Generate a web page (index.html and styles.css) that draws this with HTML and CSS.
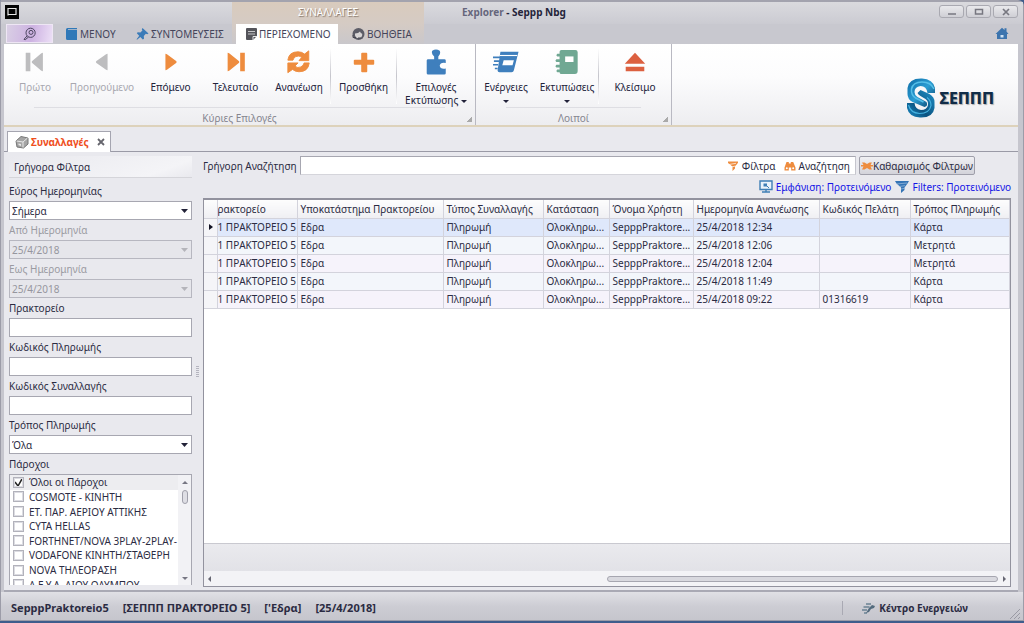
FILE: index.html
```html
<!DOCTYPE html>
<html lang="el">
<head>
<meta charset="utf-8">
<title>Explorer - Seppp Nbg</title>
<link rel="stylesheet" href="styles.css">
</head>
<body>
<div class="window">
  <header class="titlebar">
    <div class="app-icon"><svg width="14" height="14" viewBox="0 0 14 14"><rect width="14" height="14" fill="#050505"/><path d="M3 10.500V3.500h8v6H3" fill="none" stroke="#e8e8e8" stroke-width="1.200"/></svg></div>
    <div class="context-title">ΣΥΝΑΛΛΑΓΕΣ</div>
    <h1 class="caption"><span>Explorer</span> - Seppp Nbg</h1>
    <div class="window-buttons">
      <button type="button" aria-label="Minimize"><svg width="10" height="8" viewBox="0 0 10 8"><path d="M1 6h8" stroke="#777780" stroke-width="1.500"/></svg></button>
      <button type="button" aria-label="Maximize"><svg width="10" height="8" viewBox="0 0 10 8"><rect x="1.500" y="1.500" width="7" height="4.500" fill="none" stroke="#777780" stroke-width="1.500"/></svg></button>
      <button type="button" aria-label="Close"><svg width="10" height="8" viewBox="0 0 10 8"><path d="M2 1l6 6M8 1L2 7" stroke="#777780" stroke-width="1.700"/></svg></button>
    </div>
  </header>
  <nav class="tabs">
    <button type="button" class="search-button" aria-label="Explorer"><svg width="14" height="14" viewBox="0 0 14 14"><circle cx="7.600" cy="5.800" r="4.600" fill="none" stroke="#4c4660" stroke-width="1"/><circle cx="8" cy="5.400" r="2" fill="none" stroke="#4c4660" stroke-width="1"/><path d="M4 9L1 12.300l1.300.4 3.200-2.700" fill="none" stroke="#4c4660" stroke-width="1"/></svg></button>
    <a class="tab tab-menu" href="#"><svg width="13" height="14" viewBox="0 0 13 14"><path d="M2.500 1H12v1.200H3v.9h9V13H2.500A1.500 1.500 0 0 1 1 11.500v-9A1.500 1.500 0 0 1 2.500 1z" fill="#2f78b8"/></svg>ΜΕΝΟΥ</a>
    <a class="tab tab-links" href="#"><svg width="13" height="14" viewBox="0 0 13 14"><path d="M6.500 1l6 5.500-1.300.7-1.400-.4-2 2.200.2 2.700-1.200.8-2.500-2.500L1 12.700.6 12.300l2.600-3.500L.8 6.300l.9-1 2.700.1 2-2-.6-1.200z" fill="#3b7bb8"/></svg>ΣΥΝΤΟΜΕΥΣΕΙΣ</a>
    <div class="context-tabs">
      <a class="tab tab-active" href="#"><svg width="12" height="14" viewBox="0 0 12 14"><path d="M2 1h9a1 1 0 0 1 1 1v7l-4 4H2a1 1 0 0 1-1-1V2a1 1 0 0 1 1-1z" fill="#54545a"/><path d="M3 4.500h7M3 7h7" stroke="#c5c5c8"/><path d="M8 13V9.500h4" fill="none" stroke="#e8e8ea"/></svg>ΠΕΡΙΕΧΟΜΕΝΟ</a>
      <a class="tab" href="#"><svg width="13" height="14" viewBox="0 0 13 14"><circle cx="6.500" cy="7" r="6" fill="#5c5c66"/><path d="M3 6.500q3.500 0 5-2 .5 2 2.200 2.200v1.500a3.700 3.700 0 0 1-7.200 0z" fill="#d8d5d5"/><path d="M1 8v2.500h3M6 11h3" stroke="#44444e" fill="none"/></svg>ΒΟΗΘΕΙΑ</a>
    </div>
    <a class="home" href="#" aria-label="Home"><svg width="14" height="13" viewBox="0 0 14 13"><path d="M7 .8l2.500 2.100V1.300h2v3.300L13.500 7H12v5H2V7H.5z" fill="#3c74ae"/><path d="M5.500 8h3v2.500h-3z" fill="#cfe2f3"/></svg></a>
  </nav>

  <section class="ribbon">
    <div class="ribbon-group">
      <div class="ribbon-items">
        <button type="button" class="tool w62" disabled><svg viewBox="0 0 28 28"><path d="M4 4h5v20H4zM22.500 4v20q-1 0-2-.8l-9.500-8q-1.300-1.200 0-2.400l9.500-8q1-.8 2-.8z" fill="#bdbdbf"/></svg><span>Πρώτο</span></button>
        <button type="button" class="tool w72" disabled><svg viewBox="0 0 28 28"><path d="M20 5v18q-1 0-2-.8l-10-7q-1.300-1.200 0-2.400l10-7q1-.8 2-.8z" fill="#bdbdbf"/></svg><span>Προηγούμενο</span></button>
        <button type="button" class="tool w65"><svg viewBox="0 0 28 28"><path d="M8 5v18q1 0 2-.8l9.500-7q1.300-1.200 0-2.400l-9.500-7q-1-.8-2-.8z" fill="#ee8c3e"/></svg><span>Επόμενο</span></button>
        <button type="button" class="tool w65"><svg viewBox="0 0 28 28"><path d="M18.500 4h5v20h-5zM5 4v20q1 0 2-.8l10-8q1.300-1.200 0-2.400l-10-8Q6 4 5 4z" fill="#ee8c3e"/></svg><span>Τελευταίο</span></button>
        <button type="button" class="tool w62"><svg viewBox="0 0 28 28"><path d="M2 12Q3 3 13 3q4 0 7 2.500L24.500 2v10.500H14L17 9q-3-2.500-6.500-.8Q8 9.500 7.500 12zM25 15q-1 9.500-11 9.500-4 0-7-2.500L2 25.500V15h11l-3.500 3.500q3 2.500 6.500.8Q19 18 19.500 15z" fill="#ee8c3e" stroke="#ee8c3e"/></svg><span>Ανανέωση</span></button>
        <i class="divider"></i>
        <button type="button" class="tool w65"><svg viewBox="0 0 28 28"><path d="M12 4h4.500q1 0 1 1v6.500H24q1 0 1 1V16q0 1-1 1h-6.500v7q0 1-1 1H12q-1 0-1-1v-7H4q-1 0-1-1v-3.500q0-1 1-1h7V5q0-1 1-1z" fill="#ee8c3e"/></svg><span>Προσθήκη</span></button>
        <i class="divider"></i>
        <button type="button" class="tool w78"><svg viewBox="0 0 28 28"><path d="M10 2q4-3 8 0 1.500 3-1.500 6v3H23q1.500 0 1.500 1.500V15q-6-1-6.500 3 .5 4 6.500 3v5q0 1.500-1.500 1.500H5.500Q4 27.500 4 26V12.500Q4 11 5.500 11H12V8Q8.500 5 10 2z" fill="#3f7fbd"/></svg><span>Επιλογές<br>Εκτύπωσης <b class="caret"></b></span></button>
      </div>
      <div class="group-name">Κύριες Επιλογές</div>
    </div>
    <div class="ribbon-group">
      <div class="ribbon-items">
        <button type="button" class="tool w60"><svg viewBox="0 0 28 28"><path d="M8 3h19.500l-5 20q-.5 2-2.500 2H7q-2.500 0-2-2.500z" fill="#3f7fbd"/><path d="M7.500 7h18.500" stroke="#fff" stroke-width="1.200"/><path d="M11.500 12h11l-1.500 5.500H10z" fill="#fff"/><path d="M0 9h8M1 13h6M0 17h5.500M2 21h3" stroke="#3f7fbd" stroke-width="1.800"/></svg><span>Ενέργειες<br><b class="caret"></b></span></button>
        <button type="button" class="tool w62"><svg viewBox="0 0 28 28"><path d="M8 1h15q2.500 0 2.500 2.500v20q0 3.500-3 3.500H8q-2 0-2-2H3.500q-2-1.500 0-3H6v-2H2.500q-2-1.500 0-3H6v-3H2.500q-2-1.500 0-3H6V8H3.500q-2-1.500 0-3H6V3q0-2 2-2z" fill="#70a893"/><path d="M12 8h9v6h-9z" fill="#fff"/></svg><span>Εκτυπώσεις<br><b class="caret"></b></span></button>
        <i class="divider"></i>
        <button type="button" class="tool w72"><svg viewBox="0 0 28 28"><path d="M14 4l11 12H3zM4 19h20v5H4z" fill="#dc6040"/></svg><span>Κλείσιμο</span></button>
      </div>
      <div class="group-name">Λοιποί</div>
    </div>
    <div class="logo">
      <svg width="28" height="40" viewBox="0 0 28 40"><defs><linearGradient id="top" x1="0" y1="0" x2="1" y2="1"><stop offset="0" stop-color="#0d6ca6"/><stop offset=".5" stop-color="#2b9dd3"/><stop offset="1" stop-color="#0a3f66"/></linearGradient><linearGradient id="bottom" x1="1" y1="0" x2="0" y2="1"><stop offset="0" stop-color="#1f94cc"/><stop offset=".6" stop-color="#0b527f"/><stop offset="1" stop-color="#1b8cc6"/></linearGradient></defs><path d="M28 15V10Q26 1 15 .5 2 0 .5 10v6q0 5 5 8l12 5q4-1 2-5l-9-5q-3-2-3-5 0-5 6-6 6 0 7 7z" fill="url(#top)"/><path d="M0 25v5q2 9 13 9.500 13 .5 14.500-9.500v-6q0-5-5-8l-9-4-3 3q1 2 3 3l5 3q3 2 2.500 6-1 5-7 5-6-1-6.500-7z" fill="url(#bottom)"/><path d="M27 11Q24 4 15 4 6 4 4.500 11q-.5 6 4 9l8 4" fill="none" stroke="#55bfe8" stroke-width="1.500"/><path d="M1.500 27q2 8 11 8.500 10 0 11.500-8 0-5-4-8" fill="none" stroke="#45b2e0" stroke-width="1.200"/></svg>
      <span>ΣΕΠΠΠ</span>
    </div>
  </section>

  <div class="doc-tabs"><div class="doc-tab"><svg width="14" height="14" viewBox="0 0 14 14"><path d="M1 6l5-4.500L13 3v6l-4.500 4L2 12z" fill="#a5a5a5" stroke="#777"/><path d="M1.500 6L8 7l4.500-4M8 7v5.500" fill="none" stroke="#e8e8e8"/><path d="M3.500 8.500l2.500.5v2L3.500 10z" fill="#e9e9e9"/></svg><span>Συναλλαγές</span><button type="button" aria-label="Κλείσιμο καρτέλας"><svg width="8" height="8" viewBox="0 0 8 8"><path d="M1 1l6 6M7 1L1 7" stroke="#66666e" stroke-width="1.800"/></svg></button></div></div>

  <main class="page">
    <aside class="filters">
      <h2>Γρήγορα Φίλτρα</h2>
      <label for="range">Εύρος Ημερομηνίας</label>
      <select id="range"><option>Σήμερα</option></select>
      <label for="from" class="off">Από Ημερομηνία</label>
      <select id="from" disabled><option>25/4/2018</option></select>
      <label for="to" class="off">Εως Ημερομηνία</label>
      <select id="to" disabled><option>25/4/2018</option></select>
      <label for="agency">Πρακτορείο</label>
      <input id="agency" type="text">
      <label for="paycode">Κωδικός Πληρωμής</label>
      <input id="paycode" type="text">
      <label for="trcode">Κωδικός Συναλλαγής</label>
      <input id="trcode" type="text">
      <label for="method">Τρόπος Πληρωμής</label>
      <select id="method"><option>Όλα</option></select>
      <h3>Πάροχοι</h3>
      <div class="listbox">
        <div class="options">
          <label class="selected"><input type="checkbox" checked>Όλοι οι Πάροχοι</label>
          <label><input type="checkbox">COSMOTE - ΚΙΝΗΤΗ</label>
          <label><input type="checkbox">ΕΤ. ΠΑΡ. ΑΕΡΙΟΥ ΑΤΤΙΚΗΣ</label>
          <label><input type="checkbox">CYTA HELLAS</label>
          <label><input type="checkbox">FORTHNET/NOVA 3PLAY-2PLAY-</label>
          <label><input type="checkbox">VODAFONE ΚΙΝΗΤΗ/ΣΤΑΘΕΡΗ</label>
          <label><input type="checkbox">NOVA ΤΗΛΕΟΡΑΣΗ</label>
          <label><input type="checkbox">Δ.Ε.Υ.Α. ΔΙΟΥ ΟΛΥΜΠΟΥ</label>
        </div>
        <div class="vscroll"><i class="arrow up"></i><i class="thumb"></i><i class="arrow down"></i></div>
      </div>
    </aside>
    <div class="splitter"><i></i></div>
    <section class="results">
      <div class="search-row">
        <label for="quick">Γρήγορη Αναζήτηση</label>
        <div class="search-box">
          <input id="quick" type="text">
          <button type="button"><svg width="12" height="12" viewBox="0 0 12 12"><path d="M1 1.500h10v1.300L8 6.500v2L5.500 11V6.500L1 3z" fill="#ee8c3e"/><path d="M2 4.500l7-1.200M4.500 7l4-1" stroke="#fff" stroke-width=".7"/></svg>Φίλτρα</button>
          <button type="button"><svg width="12" height="12" viewBox="0 0 12 12"><path d="M2.500 2h2.300v1.500h2V2h2.400l2.300 5.500v3H7.200V7.500H4.800v3H.5v-3z" fill="#ee8c3e"/><circle cx="2.800" cy="8.300" r="1" fill="#fff"/><circle cx="9.200" cy="8.300" r="1" fill="#fff"/></svg>Αναζήτηση</button>
        </div>
        <button type="button" class="clear"><svg width="12" height="12" viewBox="0 0 12 12"><path d="M1 2.500h2.500L6 4l2.500-1.500H11L9.500 5H12v1.500H9.500L11 9.500H8.500L6 8 3.500 9.500H1l1.500-3H0V5h2.500z" fill="#ee8c3e"/></svg>Καθαρισμός Φίλτρων</button>
      </div>
      <div class="view-row">
        <a href="#"><svg width="14" height="13" viewBox="0 0 14 13"><path d="M1 1h12v8.500H1z" fill="#eaf3fb" stroke="#3f7fb6" stroke-width="1.400"/><path d="M7 9.500v2.500M3 12h8" stroke="#3f7fb6" stroke-width="1.400"/><path d="M4.500 3.500h3.500v3H4.500z" fill="#3f7fb6"/><path d="M8 6l2 2" stroke="#3f7fb6"/></svg>Εμφάνιση: Προτεινόμενο</a>
        <a href="#"><svg width="14" height="13" viewBox="0 0 14 13"><path d="M0 1h14l-1.500 2.500-3 4v2.500L6 13V7.500L1.500 3.500z" fill="#3474b5"/><path d="M1.500 4l10.500-1M4 6.500l6-.8M6 9l3.500-.7" stroke="#b5cde6" stroke-width=".6"/></svg>Filters: Προτεινόμενο</a>
      </div>
      <div class="grid">
        <table>
          <colgroup><col class="c-mark"><col class="c-agency"><col class="c-branch"><col class="c-type"><col class="c-state"><col class="c-user"><col class="c-date"><col class="c-client"><col></colgroup>
          <thead><tr><th></th><th class="cut">ρακτορείο</th><th>Υποκατάστημα Πρακτορείου</th><th>Τύπος Συναλλαγής</th><th>Κατάσταση</th><th>Όνομα Χρήστη</th><th>Ημερομηνία Ανανέωσης</th><th>Κωδικός Πελάτη</th><th>Τρόπος Πληρωμής</th></tr></thead>
          <tbody>
            <tr class="current"><td><i class="marker"></i></td><td class="cut">1 ΠΡΑΚΤΟΡΕΙΟ 5</td><td>Εδρα</td><td>Πληρωμή</td><td>Ολοκληρω...</td><td>SepppPraktore...</td><td>25/4/2018 12:34</td><td></td><td>Κάρτα</td></tr>
            <tr><td></td><td class="cut">1 ΠΡΑΚΤΟΡΕΙΟ 5</td><td>Εδρα</td><td>Πληρωμή</td><td>Ολοκληρω...</td><td>SepppPraktore...</td><td>25/4/2018 12:06</td><td></td><td>Μετρητά</td></tr>
            <tr class="alt"><td></td><td class="cut">1 ΠΡΑΚΤΟΡΕΙΟ 5</td><td>Εδρα</td><td>Πληρωμή</td><td>Ολοκληρω...</td><td>SepppPraktore...</td><td>25/4/2018 12:04</td><td></td><td>Μετρητά</td></tr>
            <tr><td></td><td class="cut">1 ΠΡΑΚΤΟΡΕΙΟ 5</td><td>Εδρα</td><td>Πληρωμή</td><td>Ολοκληρω...</td><td>SepppPraktore...</td><td>25/4/2018 11:49</td><td></td><td>Κάρτα</td></tr>
            <tr class="alt"><td></td><td class="cut">1 ΠΡΑΚΤΟΡΕΙΟ 5</td><td>Εδρα</td><td>Πληρωμή</td><td>Ολοκληρω...</td><td>SepppPraktore...</td><td>25/4/2018 09:22</td><td>01316619</td><td>Κάρτα</td></tr>
          </tbody>
        </table>
        <div class="grid-footer"></div>
        <div class="hscroll"><i class="arrow left"></i><div class="track"><i class="bar"></i></div><i class="arrow right"></i></div>
      </div>
    </section>
  </main>

  <footer class="status">
    <span>SepppPraktoreio5</span><span>[ΣΕΠΠΠ ΠΡΑΚΤΟΡΕΙΟ 5]</span><span>['Εδρα]</span><span>[25/4/2018]</span>
    <button type="button" class="center"><svg width="13" height="12" viewBox="0 0 13 12"><path d="M4 2h5M1.500 5h6M0 8h5M2 11h3" stroke="#6b8294" stroke-width="1.600"/><path d="M4 11l3-5 3-3 3 1-1 2-3 1-2 3z" fill="#536b7e"/></svg>Κέντρο Ενεργειών</button>
    <svg class="grip" width="12" height="12" viewBox="0 0 12 12"><path d="M1 11L11 1M5 11l6-6M9 11l2-2" stroke="#9a9aa4"/></svg>
  </footer>
</div>
</body>
</html>
```
FILE: styles.css
```css
* { box-sizing: border-box; }
body { margin: 0; font: 10px/14px "Noto Sans", "Open Sans", sans-serif; color: #2b2b42; background: #3f5d8c; }
button, input, select { font: inherit; color: inherit; }
button { border: 0; padding: 0; background: none; }
a { color: inherit; text-decoration: none; }
svg { flex: none; display: block; }
h1, h2, h3 { margin: 0; font-weight: 400; font-size: inherit; }

.window { display: flex; flex-direction: column; height: calc(100vh - 2px); padding: 0 5px 0 3px; background: #c6c6ce; border: 1px solid #9c9ca8; border-top: 2px solid #a3a3ae; border-radius: 0 6px 0 0; }

.titlebar { display: flex; height: 22px; flex: none; margin: 0 -5px 0 -3px; background: linear-gradient(#dadade, #cbcbd2); }
.app-icon { width: 231px; padding: 3px 0 0 4px; }
.context-title { width: 192px; line-height: 20px; text-align: center; color: #fff; text-shadow: 1px 1px 1px #85766a; background: linear-gradient(#d9cbbd, #d5cbc4); }
.caption { flex: 1; padding-left: 38px; line-height: 20px; font-weight: 700; color: #25253a; }
.caption span { color: #66667c; }
.window-buttons { display: flex; gap: 2px; padding: 3px 5px 0 0; }
.window-buttons button { display: flex; align-items: center; justify-content: center; width: 25px; height: 13px; border: 1px solid #a9a9b1; border-radius: 3px; background: linear-gradient(#e9e9ec, #cfcfd5); }

.tabs { display: flex; height: 20px; flex: none; margin: 0 -5px 0 -3px; background: #c8c8cf; color: #44445a; }
.search-button { display: flex; align-items: center; justify-content: center; width: 47px; height: 19px; margin: 0 12px 0 5px; border: 1px solid #eee6f4; background: linear-gradient(100deg, #d9cfe4, #cdb2e2 55%, #ecdff6); }
.tab { display: flex; align-items: center; gap: 2px; }
.tab-menu { width: 71px; }
.tab-links { width: 96px; }
.context-tabs { display: flex; width: 192px; padding-left: 4px; background: linear-gradient(#d5cbc4, #c9c7cb); }
.tab-active { width: 102px; margin-right: 14px; padding-left: 9px; background: #fff; }
.home { margin-left: auto; padding: 3px 14px 0 0; }

.ribbon { display: flex; height: 83px; flex: none; background: linear-gradient(#fff, #fcfcfd 40%, #ededf0); border-bottom: 2px solid #ddd2bb; }
.ribbon-group { display: flex; flex-direction: column; border-right: 1px solid #b9b9c2; background: linear-gradient(315deg, #aaa 4px, transparent 4px) right 3px bottom 3px / 5px 5px no-repeat; }
.ribbon-items { display: flex; height: 65px; }
.tool { display: flex; flex-direction: column; align-items: center; gap: 6px; padding-top: 5px; line-height: 13px; color: #22223a; }
.tool svg { width: 28px; height: 26px; }
.tool:disabled { color: #a8a8b0; }
.w60 { width: 60px; } .w62 { width: 62px; } .w65 { width: 65px; } .w72 { width: 72px; } .w78 { width: 78px; }
.divider { width: 1px; height: 56px; margin-top: 4px; background: linear-gradient(#fff, #c5c5cc, #fff); }
.caret { display: inline-block; border: 3px solid transparent; border-top-color: #22223a; border-bottom: 0; vertical-align: middle; }
.group-name { flex: 1; margin: 0 30px; border-top: 1px solid #dedee3; text-align: center; line-height: 20px; color: #85858f; }
.logo { display: flex; align-items: center; gap: 4px; margin: 28px 24px 0 auto; align-self: flex-start; height: 52px; font: 800 16px "Noto Sans", sans-serif; color: #102c48; text-shadow: 1px 1px 1px #aaa; }

.doc-tabs { display: flex; height: 25px; flex: none; padding-left: 3px; background: #e9e9ee; border-bottom: 1px solid #9a9aa6; }
.doc-tab { display: flex; align-items: center; gap: 2px; height: 21px; margin-top: 4px; padding: 0 5px 0 7px; border: 1px solid #a5a5b0; border-bottom: 0; background: #fff; color: #ef4f1d; font-weight: 700; }
.doc-tab button { margin-left: 6px; }

.page { display: flex; flex: 1; min-height: 0; padding: 4px 7px 3px 5px; background: #e9e9ee; border-bottom: 2px solid #a9a9b4; }
.filters { display: flex; flex-direction: column; width: 183px; flex: none; }
.filters h2 { height: 22px; padding-left: 5px; line-height: 22px; border-bottom: 1px solid #d5d5da; background: linear-gradient(160deg, #e9e9ee, #f4f4f7 80%, #e9e9ee); }
.filters > label, .filters h3 { height: 20px; padding-top: 3px; flex: none; }
.filters .off { color: #9b9ba2; }
.filters > h2 + label { height: 23px; padding-top: 6px; }
.filters > input, select { width: 183px; height: 19px; flex: none; padding: 0 2px; border: 1px solid #a7a7b1; border-radius: 0; background: #fff; appearance: none; }
select { background: url("data:image/svg+xml,%3Csvg xmlns='http://www.w3.org/2000/svg' width='7' height='4'%3E%3Cpath d='M0 0h7L3.500 4z' fill='%23222238'/%3E%3C/svg%3E") right 3px center no-repeat #fff; }
select:disabled { color: #96969e; opacity: 1; border-color: #b7b7c0; background: url("data:image/svg+xml,%3Csvg xmlns='http://www.w3.org/2000/svg' width='7' height='4'%3E%3Cpath d='M0 0h7L3.500 4z' fill='%23b4b4ba'/%3E%3C/svg%3E") right 3px center no-repeat #e6e6eb; }
.listbox { display: flex; flex: 1; min-height: 0; overflow: hidden; margin-bottom: 2px; border: 1px solid #a7a7b1; border-bottom: 0; background: #fff; }
.options { display: grid; grid-template-rows: repeat(8, 1fr); flex: 1; height: 117px; min-width: 0; overflow: hidden; }
.options label { display: flex; align-items: center; gap: 5px; padding-left: 3px; white-space: nowrap; min-height: 0; line-height: 14px; }
.options .selected { background: #ededf0; }
.options input { width: 11px; height: 11px; margin: 0; flex: none; appearance: none; border: 1px solid #b2b2bb; background: #fff; box-shadow: inset 0 0 0 1px #dcdce2; }
.options input:checked { background: url("data:image/svg+xml,%3Csvg xmlns='http://www.w3.org/2000/svg' width='9' height='9'%3E%3Cpath d='M1 4l3 4L8.500 0' fill='none' stroke='%23222' stroke-width='1.500'/%3E%3C/svg%3E") center no-repeat #fff; }
.vscroll { display: flex; flex-direction: column; align-items: center; width: 13px; padding: 6px 0 5px; background: #f2f2f5; }
.arrow { border: 3px solid transparent; }
.up { border-bottom-color: #777783; border-top: 0; }
.down { border-top-color: #777783; border-bottom: 0; margin-top: auto; }
.left { border-right-color: #666672; border-left: 0; }
.right { border-left-color: #666672; border-right: 0; }
.thumb { width: 6px; height: 14px; margin-top: 6px; border: 1px solid #a0a0ab; border-radius: 3px; background: #dedee4; }
.splitter { display: flex; align-items: center; justify-content: center; width: 11px; flex: none; }
.splitter i { width: 3px; height: 12px; background: repeating-linear-gradient(#b5b5bf 0 1px, #e9e9ee 1px 2px); }

.results { display: flex; flex: 1; flex-direction: column; min-width: 0; }
.search-row { display: flex; align-items: center; height: 19px; gap: 3px; padding-right: 36px; }
.search-box { display: flex; flex: 1; height: 19px; padding-right: 5px; gap: 8px; background: #fff; border: 1px solid #a7a7b1; border-right-color: #c5c5cd; border-bottom-color: #d5d5db; }
.search-box input { flex: 1; min-width: 0; border: 0; outline: 0; background: none; }
.search-box button, .clear { display: flex; align-items: center; gap: 3px; }
.clear { height: 19px; padding: 0 1px; gap: 0; border: 1px solid #9f9faa; border-radius: 2px; background: linear-gradient(#f0f0f3, #d3d3da); }
.view-row { display: flex; justify-content: flex-end; gap: 4px; height: 23px; align-items: center; color: #1414e6; }
.view-row a { display: flex; align-items: center; gap: 3px; }
.grid { display: flex; flex: 1; min-height: 0; flex-direction: column; background: #fff; border: 1px solid #92929e; border-top-width: 2px; }
table { width: 100%; table-layout: fixed; border-collapse: collapse; }
th, td { height: 18px; padding: 0 3px; overflow: hidden; white-space: nowrap; text-align: left; font-weight: 400; border-right: 1px solid #d3d3dc; border-bottom: 1px solid #d3d3dc; }
th { background: linear-gradient(#fdfdfd, #efeff3); }
td { background: #f3f6fb; }
.alt td { background: #f6f3fb; }
.current td { background: #dfe8fb; }
tbody td:first-child { background: #f5f5f8; }
.cut { padding: 0; }
.marker { display: block; width: 0; margin-left: 2px; border: 3px solid transparent; border-left: 4px solid #111122; border-right: 0; }
.c-mark { width: 13px; } .c-agency { width: 80px; } .c-branch { width: 146px; } .c-type { width: 100px; } .c-state { width: 66px; } .c-user { width: 84px; } .c-date { width: 126px; } .c-client { width: 91px; }
.grid-footer { height: 28px; margin-top: auto; background: linear-gradient(#eaeaee, #e2e2e7); border-top: 1px solid #c9c9d0; }
.hscroll { display: flex; align-items: center; height: 15px; padding: 0 4px; background: #f3f3f6; }
.track { display: flex; flex: 1; justify-content: flex-end; padding: 0 5px; }
.bar { width: 50%; height: 6px; border: 1px solid #a6a6b0; border-radius: 3px; background: #d9d9df; }

.status { display: flex; align-items: center; height: 28px; flex: none; margin: 0 -5px 0 -3px; padding: 3px 2px 0 10px; gap: 14px; font-size: 11px; font-weight: 700; background: linear-gradient(#e0e0e5, #cdcdd4 50%, #c6c6cd); }
.center { display: flex; align-items: center; gap: 4px; margin-left: auto; margin-right: 27px; padding-left: 19px; border-left: 1px solid #a9a9b3; font-size: 10px; }
.grip { align-self: flex-end; }
```
